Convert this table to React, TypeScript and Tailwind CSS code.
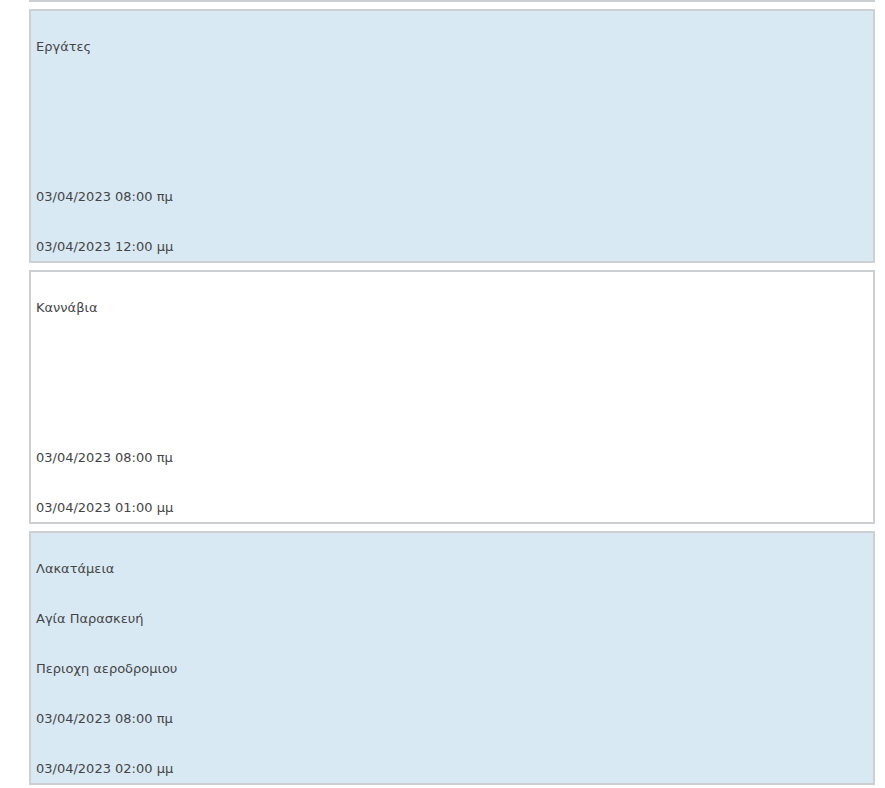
const cards = [
  {
    blue: true,
    rows: ['Εργάτες', '', '', '03/04/2023 08:00 πμ', '03/04/2023 12:00 μμ'],
  },
  {
    blue: false,
    rows: ['Καννάβια', '', '', '03/04/2023 08:00 πμ', '03/04/2023 01:00 μμ'],
  },
  {
    blue: true,
    rows: ['Λακατάμεια', 'Αγία Παρασκευή', 'Περιοχη αεροδρομιου', '03/04/2023 08:00 πμ', '03/04/2023 02:00 μμ'],
  },
];

export default function App() {
  return (
    <div className="min-h-screen bg-white font-['DejaVu_Sans',sans-serif] text-[13px] text-[#454545]">
      <div className="ml-[29px] flex w-[846px] flex-col gap-[7px]">
        {/* tail of the card above */}
        <div className="h-[2px] bg-[#cdd0d3]" />

        {cards.map((card, i) => (
          <div
            key={i}
            className={
              'flex flex-col border-2 border-[#cdd0d3] ' +
              (card.blue ? 'bg-[#d9e9f4]' : 'bg-white')
            }
          >
            {card.rows.map((row, j) => (
              <div key={j} className="h-[50px] px-[5px] pt-[28px] leading-[16px]">
                {row}
              </div>
            ))}
          </div>
        ))}
      </div>
    </div>
  );
}
